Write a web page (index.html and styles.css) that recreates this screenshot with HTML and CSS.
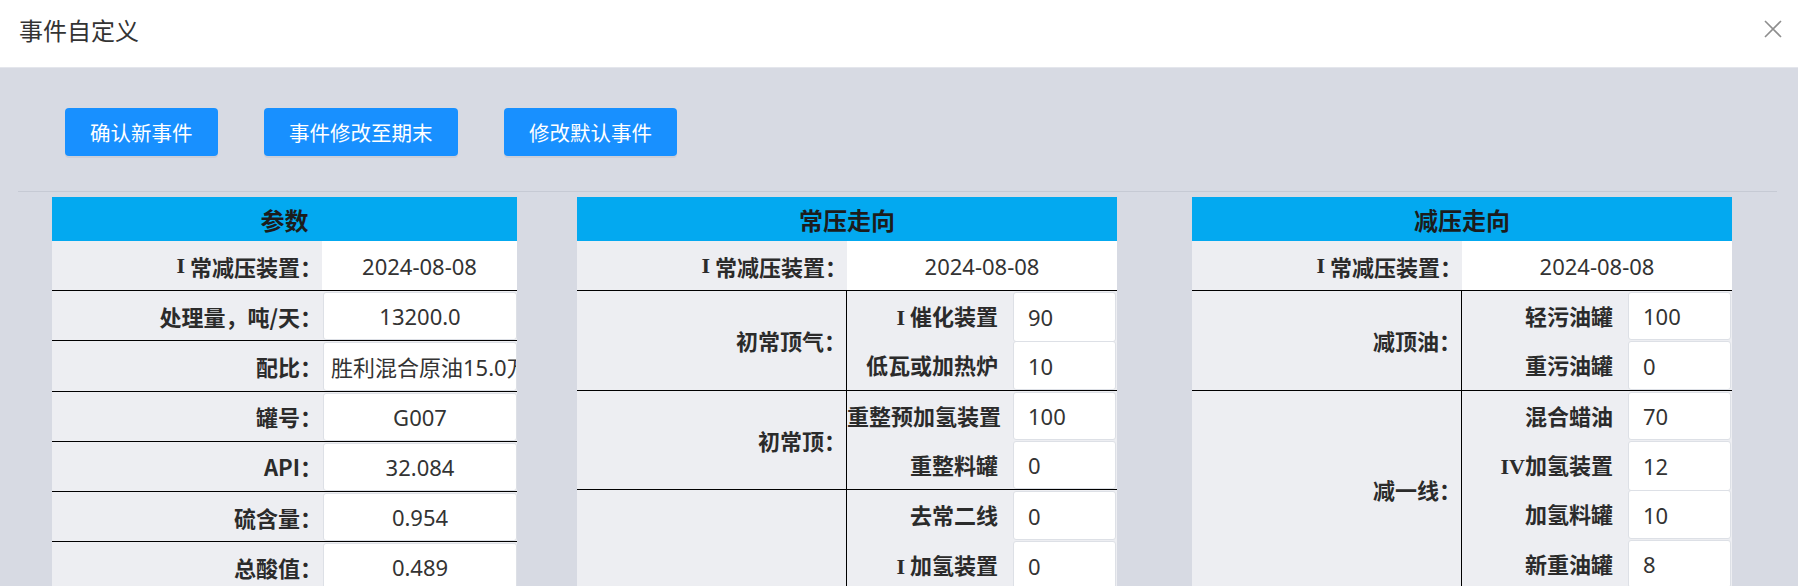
FILE: index.html
```html
<!DOCTYPE html>
<html lang="zh-CN">
<head>
<meta charset="utf-8">
<title>事件自定义</title>
<link rel="stylesheet" href="styles.css">
</head>
<body>
<div class="dialog">
  <header class="dlg-head">
    <span class="title">事件自定义</span>
    <span class="close" aria-label="关闭">
      <svg width="18" height="18" viewBox="0 0 18 18"><path d="M1 1 L17 17 M17 1 L1 17" stroke="#8e8e8e" stroke-width="1.6" fill="none"/></svg>
    </span>
  </header>
  <main class="dlg-body">
    <div class="actions">
      <button class="btn">确认新事件</button>
      <button class="btn">事件修改至期末</button>
      <button class="btn">修改默认事件</button>
    </div>
    <div class="tables">
      <section class="tbl tbl-params">
        <div class="th">参数</div>
        <div class="row"><div class="lbl"><span class="rn sp">I</span>常减压装置：</div><div class="val"><span>2024-08-08</span></div></div>
        <div class="row"><div class="lbl">处理量，吨/天：</div><div class="val inp"><span>13200.0</span></div></div>
        <div class="row"><div class="lbl">配比：</div><div class="val inp"><span>胜利混合原油15.0万吨，阿曼原油</span></div></div>
        <div class="row"><div class="lbl">罐号：</div><div class="val inp"><span>G007</span></div></div>
        <div class="row"><div class="lbl">API：</div><div class="val inp"><span>32.084</span></div></div>
        <div class="row"><div class="lbl">硫含量：</div><div class="val inp"><span>0.954</span></div></div>
        <div class="row"><div class="lbl">总酸值：</div><div class="val inp"><span>0.489</span></div></div>
      </section>

      <section class="tbl tbl-flow tbl-atm">
        <div class="th">常压走向</div>
        <div class="row"><div class="lbl"><span class="rn sp">I</span>常减压装置：</div><div class="val"><span>2024-08-08</span></div></div>
        <div class="grp">
          <div class="lbl">初常顶气：</div>
          <div class="subs">
            <div class="sub"><div class="slbl"><span class="rn sp">I</span>催化装置</div><div class="sinp">90</div></div>
            <div class="sub"><div class="slbl">低瓦或加热炉</div><div class="sinp">10</div></div>
          </div>
        </div>
        <div class="grp">
          <div class="lbl">初常顶：</div>
          <div class="subs">
            <div class="sub"><div class="slbl">重整预加氢装置</div><div class="sinp">100</div></div>
            <div class="sub"><div class="slbl">重整料罐</div><div class="sinp">0</div></div>
          </div>
        </div>
        <div class="grp">
          <div class="lbl">常一线：</div>
          <div class="subs">
            <div class="sub"><div class="slbl">去常二线</div><div class="sinp">0</div></div>
            <div class="sub"><div class="slbl"><span class="rn sp">I</span>加氢装置</div><div class="sinp">0</div></div>
            <div class="sub"><div class="slbl">航煤罐</div><div class="sinp">0</div></div>
            <div class="sub"><div class="slbl">柴油罐</div><div class="sinp">0</div></div>
            <div class="sub"><div class="slbl">其他</div><div class="sinp">0</div></div>
          </div>
        </div>
      </section>

      <section class="tbl tbl-flow">
        <div class="th">减压走向</div>
        <div class="row"><div class="lbl"><span class="rn sp">I</span>常减压装置：</div><div class="val"><span>2024-08-08</span></div></div>
        <div class="grp">
          <div class="lbl">减顶油：</div>
          <div class="subs">
            <div class="sub"><div class="slbl">轻污油罐</div><div class="sinp">100</div></div>
            <div class="sub"><div class="slbl">重污油罐</div><div class="sinp">0</div></div>
          </div>
        </div>
        <div class="grp">
          <div class="lbl">减一线：</div>
          <div class="subs">
            <div class="sub"><div class="slbl">混合蜡油</div><div class="sinp">70</div></div>
            <div class="sub"><div class="slbl"><span class="rn">IV</span>加氢装置</div><div class="sinp">12</div></div>
            <div class="sub"><div class="slbl">加氢料罐</div><div class="sinp">10</div></div>
            <div class="sub"><div class="slbl">新重油罐</div><div class="sinp">8</div></div>
          </div>
        </div>
      </section>
    </div>
  </main>
</div>
</body>
</html>
```

FILE: styles.css
```css
html, body {
  margin: 0;
  padding: 0;
  height: 100%;
  overflow: hidden;
}

body {
  font-family: "Noto Sans", "Noto Sans CJK SC", sans-serif;
  color: #333;
  background: #d7dae3;
}

.dialog {
  display: flex;
  flex-direction: column;
}

.dlg-head {
  height: 68px;
  box-sizing: border-box;
  background: #fff;
  border-bottom: 1px solid #e4e6ec;
  display: flex;
  align-items: center;
  justify-content: space-between;
  padding: 0 16px 0 19px;
}

.title {
  font-family: "Noto Sans CJK SC", sans-serif;
  font-size: 24px;
  line-height: 24px;
  color: #333;
  margin-bottom: 7px;
}

.close {
  display: flex;
  width: 18px;
  height: 18px;
  margin-bottom: 10px;
}

.dlg-body {
  padding: 0 21px 0 18px;
}

.actions {
  display: flex;
  gap: 46.5px;
  padding: 40px 0 35px 47px;
  border-bottom: 1px solid #c6cad4;
}

.btn {
  height: 48px;
  padding: 0 25px;
  border: none;
  border-radius: 4px;
  background: #1890ff;
  color: #fff;
  font-family: "Noto Sans CJK SC", sans-serif;
  font-size: 20.5px;
  box-shadow: 0 2px 0 rgba(0, 0, 0, 0.05);
  cursor: pointer;
}

.tables {
  display: flex;
  align-items: flex-start;
  padding: 5px 0 0 34px;
}

.tbl {
  flex: none;
  background: #edeef2;
}

.tbl-params {
  width: 465px;
  margin-right: 60px;
}

.tbl-flow {
  width: 540px;
}

.tbl-atm {
  margin-right: 75px;
}

.th {
  height: 44px;
  background: #03a9f0;
  display: flex;
  align-items: center;
  justify-content: center;
  font-family: "Noto Sans CJK SC", sans-serif;
  font-weight: 700;
  font-size: 24px;
  color: #1c1c1c;
}

.row,
.grp {
  display: grid;
  grid-template-columns: 270px 1fr;
  border-top: 1px solid #000;
}

.th + .row {
  border-top: none;
}

.row {
  height: 49.2px;
}

.lbl {
  display: flex;
  align-items: center;
  justify-content: flex-end;
  font-family: "Noto Sans CJK SC", "Noto Sans", sans-serif;
  font-weight: 700;
  font-size: 22px;
  color: #2b2b2b;
  white-space: nowrap;
}

.rn {
  font-family: "Liberation Serif", "DejaVu Serif", serif;
  font-weight: 700;
}

.rn.sp {
  margin-right: 5px;
}

.grp > .lbl {
  border-right: 1px solid #000;
}

.val {
  display: flex;
  align-items: center;
  background: #fff;
  font-size: 22px;
  color: #333;
  min-width: 0;
}

.val > span {
  flex: 1;
  min-width: 0;
  text-align: center;
  white-space: nowrap;
  overflow: hidden;
  padding: 0 7px;
}

.inp {
  border: 1px solid #dde0e6;
  border-radius: 3px;
  margin: 1px 0 0 1px;
}

.subs {
  display: flex;
  flex-direction: column;
}

.sub {
  display: grid;
  grid-template-columns: 165px 1fr;
  height: 49.3px;
}

.slbl {
  text-align: right;
  line-height: 49px;
  padding-right: 14px;
  font-family: "Noto Sans CJK SC", "Noto Sans", sans-serif;
  font-weight: 700;
  font-size: 22px;
  color: #2b2b2b;
  white-space: nowrap;
}

.sinp {
  display: flex;
  align-items: center;
  padding-left: 14px;
  background: #fff;
  border: 1px solid #dde0e6;
  border-radius: 3px;
  margin: 1px 1px 0 1px;
  font-size: 22px;
  color: #333;
}
```
